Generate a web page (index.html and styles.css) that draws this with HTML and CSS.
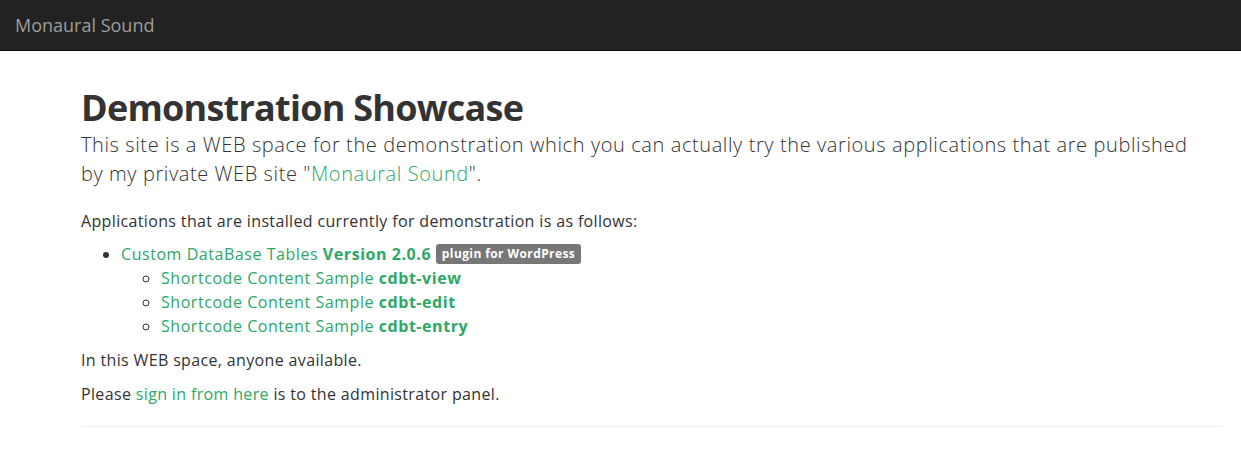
FILE: index.html
```html
<!DOCTYPE html>
<html lang="en">
<head>
<meta charset="utf-8">
<title>Monaural Sound</title>
<link rel="stylesheet" href="styles.css">
</head>
<body>
<nav class="navbar">
  <a class="brand" href="#">Monaural Sound</a>
</nav>
<main class="container">
  <h1 class="title">Demonstration Showcase</h1>
  <p class="lead">This site is a WEB space for the demonstration which you can actually try the various applications that are published<br>by my private WEB site "<a href="#">Monaural Sound</a>".</p>
  <p class="text">Applications that are installed currently for demonstration is as follows:</p>
  <ul class="apps">
    <li><a href="#">Custom DataBase Tables <strong>Version 2.0.6</strong></a> <span class="label">plugin for WordPress</span>
      <ul class="sub">
        <li><a href="#">Shortcode Content Sample <strong>cdbt-view</strong></a></li>
        <li><a href="#">Shortcode Content Sample <strong>cdbt-edit</strong></a></li>
        <li><a href="#">Shortcode Content Sample <strong>cdbt-entry</strong></a></li>
      </ul>
    </li>
  </ul>
  <p class="text">In this WEB space, anyone available.</p>
  <p class="text">Please <a href="#">sign in from here</a> is to the administrator panel.</p>
  <hr class="rule">
</main>
</body>
</html>
```
FILE: styles.css
```css
html, body {
  margin: 0;
  padding: 0;
}
body {
  font-family: "Open Sans", "Lato", sans-serif;
  font-size: 16px;
  line-height: 24px;
  color: #333333;
  background: #ffffff;
}
a {
  color: #2da866;
  text-decoration: none;
}
.navbar {
  height: 50px;
  background: #222222;
  border-bottom: 1px solid #080808;
  display: flex;
  align-items: center;
  padding-left: 15px;
}
.brand {
  color: #9d9d9d;
  font-size: 18px;
  line-height: 20px;
}
.container {
  padding: 0 20px 0 81px;
}
.title {
  font-size: 36px;
  font-weight: 700;
  line-height: 40px;
  letter-spacing: -0.75px;
  margin: 37px 0 0;
  color: #333333;
}
.lead {
  font-size: 20px;
  font-weight: 300;
  line-height: 29px;
  letter-spacing: 0.6px;
  margin: 2px 0 21px;
}
.text {
  margin: 0 0 10px;
  letter-spacing: 0.35px;
}
.apps {
  margin: -1px 0 10px;
  padding-left: 40px;
  letter-spacing: 0.55px;
}
.sub {
  margin: 0;
  padding-left: 40px;
  list-style-type: circle;
}
.label {
  display: inline-block;
  background: #777777;
  color: #ffffff;
  font-size: 12px;
  font-weight: 700;
  line-height: 1;
  letter-spacing: 0.4px;
  padding: 4px 6px 4px;
  border-radius: 3px;
  vertical-align: 2px;
}
.rule {
  border: 0;
  border-top: 1px solid #eeeeee;
  margin: 20px 0;
}
```
